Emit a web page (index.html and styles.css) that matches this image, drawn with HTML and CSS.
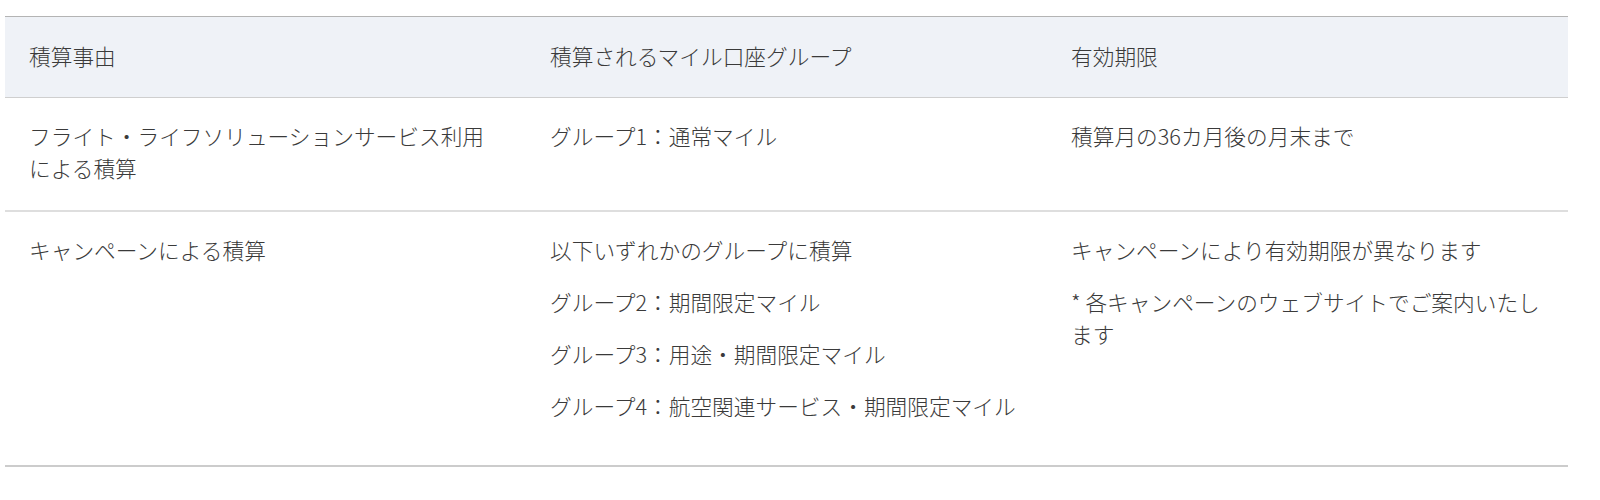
FILE: index.html
```html
<!DOCTYPE html>
<html lang="ja">
<head>
<meta charset="utf-8">
<title>マイル積算</title>
<link rel="stylesheet" href="styles.css">
</head>
<body>
<div class="page">
  <table class="mile-table">
    <thead>
      <tr>
        <th>積算事由</th>
        <th>積算されるマイル口座グループ</th>
        <th>有効期限</th>
      </tr>
    </thead>
    <tbody>
      <tr>
        <td>フライト・ライフソリューションサービス利用による積算</td>
        <td>グループ1：通常マイル</td>
        <td>積算月の36カ月後の月末まで</td>
      </tr>
      <tr>
        <td>キャンペーンによる積算</td>
        <td>
          <p>以下いずれかのグループに積算</p>
          <p>グループ2：期間限定マイル</p>
          <p>グループ3：用途・期間限定マイル</p>
          <p>グループ4：航空関連サービス・期間限定マイル</p>
        </td>
        <td>
          <p>キャンペーンにより有効期限が異なります</p>
          <p>* 各キャンペーンのウェブサイトでご案内いたします</p>
        </td>
      </tr>
    </tbody>
  </table>
</div>
</body>
</html>
```

FILE: styles.css
```css
html, body {
  margin: 0;
  padding: 0;
  background: #ffffff;
}

body {
  font-family: "Noto Sans CJK JP", "Noto Sans", sans-serif;
  font-weight: 300;
  color: #3a3a3a;
  font-size: 21.7px;
  line-height: 32px;
}

.page {
  padding: 16px 32px 0 5px;
}

.mile-table {
  width: 100%;
  table-layout: fixed;
  border-collapse: collapse;
  border-top: 1px solid #b4b4b4;
}

.mile-table th,
.mile-table td {
  width: 33.333%;
  text-align: left;
  vertical-align: top;
  font-weight: 300;
  padding: 22px 23px 26px 24px;
}

.mile-table th {
  padding-top: 23px;
  padding-bottom: 25px;
}

.mile-table thead tr {
  background: #eff2f7;
  border-bottom: 1px solid #cfcfcf;
}

.mile-table tbody tr {
  border-bottom: 2px solid #dedede;
}

.mile-table tbody tr:last-child {
  border-bottom: 2px solid #cccccc;
}

.mile-table p {
  margin: 0 0 20px;
}

.mile-table p:last-child {
  margin-bottom: 17px;
}
```
